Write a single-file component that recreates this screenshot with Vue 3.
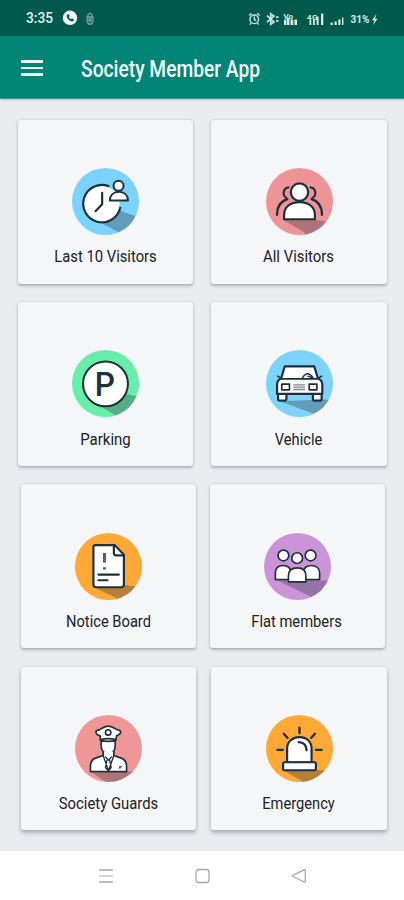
<script setup>
const rows = [
  {
    kind: 'wide',
    cards: [
      { id: 'recent', label: 'Last 10 Visitors', width: 102.5, color: '#7bd3fb', shade: 'M43 27L100 48L60 110L40 92L-24 58Z' },
      { id: 'visitors', label: 'All Visitors', width: 71, color: '#ef9496', shade: 'M-48 55L46 55L100 62L20 110L14 92Z' },
    ],
  },
  {
    kind: 'wide',
    cards: [
      { id: 'parking', label: 'Parking', width: 50.5, color: '#69eea9', shade: 'M66 32L110 42L40 110L30 95L-22 65Z' },
      { id: 'vehicle', label: 'Vehicle', width: 47.5, color: '#7dd3fb', shade: 'M-50 53L64 48L110 50L60 110L42 90L-60 52Z' },
    ],
  },
  {
    kind: 'narrow',
    cards: [
      { id: 'notice', label: 'Notice Board', width: 85, color: '#fea836', shade: 'M-42 63L46 55L110 63L30 110L24 94Z' },
      { id: 'members', label: 'Flat members', width: 90.5, color: '#cb94d9', shade: 'M-56 43L110 42L46 110L40 90Z' },
    ],
  },
  {
    kind: 'mixed',
    cards: [
      { id: 'guards', label: 'Society Guards', width: 99.5, color: '#ef9697', shade: 'M-50 72L52 70L100 66L20 110L-10 98Z' },
      { id: 'emergency', label: 'Emergency', width: 72.5, color: '#fea836', shade: 'M-48 66L50 64L100 68L10 110L6 96Z' },
    ],
  },
]
</script>

<template>
  <div class="screen">
    <header>
      <div class="status">
        <div class="status-left">
          <svg class="time" width="28" height="16" viewBox="0 0 28 16">
            <text x="0" y="12.7" textLength="27" lengthAdjust="spacingAndGlyphs">3:35</text>
          </svg>
          <svg class="phone" width="16" height="16" viewBox="0 0 16 16">
            <circle cx="8" cy="7.8" r="7.2" fill="#f3faf7" />
            <path d="M5.2 4.4l1.3-.3 1.2 2-.9 1c.5 1 1.200 1.600 2.200 2.100l1-.9 1.900 1.200c0 1.500-1.100 2.100-2.200 1.900-2.500-.5-4.700-2.900-5-5.200 0-.8.1-1.300.5-1.800z" fill="#075c50" />
          </svg>
          <svg class="usb" width="10" height="14" viewBox="0 0 10 14" fill="none" stroke="#75a69d" stroke-width="1.3">
            <path d="M3 4.500V2.500L5 1.200l2 1.300V4.500M2 5h6v4L6.500 12h-3L2 9zM4 7h2v2H4z" />
          </svg>
        </div>
        <svg class="status-right" width="132" height="18" viewBox="0 0 132 18" fill="none" stroke="#c9e3dc" stroke-width="1.400">
          <circle cx="6.300" cy="9.300" r="4.300" />
          <path d="M6.300 6.600v3l2 .9M1 5.600L3.500 3.300M11.600 5.600L9.200 3.300M3 13.100L2 14.600M9.600 13.100l1 1.500" />
          <path d="M19 5.600l7 6.300-3.300 2.400V3.800L26 6.100 19 12.200M28 7.200h2.500M28 10.800h2.500" stroke-width="1.700" />
          <g fill="#d5ebe5" stroke="none">
            <text x="35.500" y="9" font-size="8" textLength="9.500">Vo</text>
            <path d="M36 9.500h2.400v5.500h-2.400zM39 8h2.400v7h-2.400zM42.500 9.500h2.800v5.500h-2.800zM46.500 9.500h2.500v5.500h-2.500z" />
            <text x="59" y="9.500" font-size="8" textLength="10.500">4G</text>
            <path d="M61.500 10h1.800v5h-1.800zM65 9.500h1.800v5.500H65zM68.600 6.500h2v8.500h-2zM73 3.500h2.300v11.500H73z" />
            <path d="M82.500 12.500h2.200v2.500h-2.200zM86.500 11.500h2.200v3.500h-2.200zM90.300 9.500h2.200v5.500h-2.200z" />
            <path d="M94 7.500h1.400v7.500h-1.400z" />
            <text x="102.500" y="12.500" font-size="10" textLength="19" lengthAdjust="spacingAndGlyphs">31%</text>
            <path d="M128.500 4l-4.500 6.300h2.500l-1.500 5 4.500-6.500H127z" />
          </g>
        </svg>
      </div>
      <div class="appbar">
        <div class="burger"><i></i><i></i><i></i></div>
        <svg class="title" width="260" height="34" viewBox="0 0 260 34">
          <text x="0" y="25" textLength="179" lengthAdjust="spacingAndGlyphs">Society Member App</text>
        </svg>
      </div>
    </header>

    <main>
      <section v-for="(row, r) in rows" :key="r" class="row" :class="row.kind">
        <article v-for="card in row.cards" :key="card.id" class="card">
          <svg class="icon" viewBox="-100 -100 200 200">
            <clipPath :id="'disc-' + card.id"><circle r="100" /></clipPath>
            <circle r="100" :fill="card.color" />
            <path :d="card.shade" :clip-path="`url(#disc-${card.id})`" fill="#2c3440" fill-opacity=".34" />

            <g class="ink">
              <template v-if="card.id === 'recent'">
                <circle cx="-11" cy="7" r="53" class="plain" />
                <path d="M9 -46A56 56 0 1 0 44 19" fill="none" />
                <path d="M-10 -26V8L-30 29" fill="none" />
                <path d="M13 -3C13 -19 24 -29 40 -29S67 -19 67 -3Z" stroke-width="6" />
                <circle cx="39" cy="-47" r="15" stroke-width="6" />
              </template>

              <template v-else-if="card.id === 'visitors'">
                <path d="M-33 -42C-46 -41 -48 -30 -47 -21C-46 -14 -40 -10 -36 -7C-56 -1 -67 17 -67 40M33 -42C46 -41 48 -30 47 -21C46 -14 40 -10 36 -7C56 -1 67 17 67 40" fill="none" />
                <path d="M-46 53V40C-46 16 -27 2 0 2S46 16 46 40V53Z" />
                <circle cy="-28" r="26" />
              </template>

              <template v-else-if="card.id === 'parking'">
                <circle cx="0" cy="1" r="67" stroke-width="6" />
                <text x="-32" y="37" class="p-mark" textLength="60" lengthAdjust="spacingAndGlyphs">P</text>
              </template>

              <template v-else-if="card.id === 'vehicle'">
                <path d="M-64 29H-39V46Q-39 51 -45 51H-59Q-64 51 -64 46ZM40 29H66V46Q66 51 60 51H46Q40 51 40 46Z" />
                <path d="M-44 -51H44L55 -15Q68 -10 68 3V31H-67V3Q-67 -10 -55 -15Z" />
                <path d="M-65 -22L-53 -14M66 -22L54 -14M-53 -14H54" fill="none" stroke-width="5" />
                <path d="M8 -16Q24 -42 41 -16M25 -22L41 -16" fill="none" stroke-width="4" />
                <path d="M-53 2H-30V19H-53ZM29 2H52V19H29Z" stroke-width="5" />
                <path d="M-17 4H15M-17 11H15M-17 18H15" stroke="#7d8489" stroke-width="4" />
              </template>

              <template v-else-if="card.id === 'notice'">
                <path d="M-39 -64H18L46 -35V54Q46 62 38 62H-37Q-45 62 -45 54V-57Q-45 -64 -39 -64Z" />
                <path d="M16 -61V-40Q16 -33 23 -33H43" />
                <path d="M-12 -40V-12M-12 2V9" stroke="#56616b" stroke-width="9" stroke-linecap="butt" />
                <path d="M-30 24H31M-30 41H-3" fill="none" />
              </template>

              <template v-else-if="card.id === 'members'">
                <path d="M-66 39V19C-66 5 -57 -3 -43 -3S-20 5 -20 19V39ZM18 39V19C18 5 27 -3 41 -3S66 5 66 19V39Z" stroke-width="5" />
                <path d="M-27 46V28C-27 12 -17 4 0 4S25 12 25 28V46Z" stroke-width="5" />
                <circle cx="-42" cy="-33" r="16" stroke-width="5" />
                <circle cx="-1" cy="-25" r="16" stroke-width="5" />
                <circle cx="39" cy="-33" r="16" stroke-width="5" />
              </template>

              <template v-else-if="card.id === 'guards'">
                <path d="M-22 -22V-9C-22 6 -14 15 0 15S20 6 20 -9V-22Z" stroke-width="5" />
                <path d="M-16 10V21L-37 28C-49 32 -54 43 -54 54V69H54V54C54 43 48 32 36 28L16 21V10" stroke-width="5" />
                <path d="M-16 21L0 66L16 21M-9 25L0 35L9 25M-5 36L-9 57L0 67L8 57L4 36" fill="none" stroke-width="4" />
                <path d="M-24 -24L-25 -38C-41 -43 -40 -53 -31 -55C-21 -57 -14 -67 -1 -67S20 -57 30 -55C40 -53 39 -43 24 -38L22 -24Q-1 -19 -24 -24Z" stroke-width="5" />
                <path d="M-23 -27Q0 -32 22 -27" fill="none" stroke-width="5" />
                <circle cx="-1" cy="-48" r="8" stroke-width="5" />
                <path d="M33 57L39 54M34 52V60" stroke-width="3" />
              </template>

              <template v-else>
                <path d="M-37 42V0C-37 -20 -21 -34 0 -34S36 -20 36 0V42Z" />
                <rect x="-49" y="41" width="98" height="24" rx="4" />
                <path d="M-2 -19Q20 -18 21 5" fill="none" stroke-width="7" />
                <path d="M0 -62V-46M-47 -44L-36 -32M46 -44L35 -32M-66 4H-50M49 4H66" fill="none" stroke-width="7" />
              </template>
            </g>
          </svg>
          <svg class="label" viewBox="0 0 170 24">
            <text :x="84.5 - card.width / 2" y="16" :textLength="card.width" lengthAdjust="spacingAndGlyphs">{{ card.label }}</text>
          </svg>
        </article>
      </section>
    </main>

    <nav>
      <svg width="16" height="16" viewBox="0 0 16 16"><path d="M1 2h14M1 14h14" stroke-width="1.600" /><path d="M1 8h14" opacity=".6" stroke-width="1.600" /></svg>
      <svg width="16" height="16" viewBox="0 0 16 16"><rect x="2" y="1.500" width="13" height="13" rx="2.500" /></svg>
      <svg width="16" height="16" viewBox="0 0 16 16"><path d="M13.200 1.800L1.700 7.300q-.8.500 0 1L13.200 14q1.100.4 1.100-.8V2.600q0-1.200-1.100-.8z" /></svg>
    </nav>
  </div>
</template>

<style>
body { background: #fefefe; }
</style>

<style scoped>
.screen {
  width: 404px;
  height: 900px;
  overflow: hidden;
  display: flex;
  flex-direction: column;
  background: #ebecf0;
  font-family: Roboto, "Liberation Sans", sans-serif;
}
svg { display: block; flex: none; }
.status {
  box-sizing: border-box;
  height: 36px;
  background: #025a4d;
  display: flex;
  justify-content: space-between;
  padding: 10px 24px 0 26px;
}
.status-left { display: flex; }
.time text { font-size: 14.5px; font-weight: 500; fill: #e4f2ee; }
.phone { margin-left: 8px; }
.usb { margin: 2px 0 0 7px; }
.status-right { font-weight: 700; }
.appbar {
  box-sizing: border-box;
  height: 63px;
  display: flex;
  align-items: flex-start;
  padding: 16px 0 0 21px;
  background: #028575;
  border-bottom: 1px solid #3d9a8e;
}
header { box-shadow: 0 1px 2px rgba(60, 80, 90, .3); }
.burger { width: 22px; display: grid; gap: 4px; padding-top: 8px; margin-right: 38px; }
.burger i { height: 2.600px; background: #e9f8f4; }
.title text { font-size: 23.500px; font-weight: 500; fill: #f1fbf8; }

main {
  box-sizing: border-box;
  height: 752px;
  display: flex;
  flex-direction: column;
  gap: 18.500px;
  padding-top: 21px;
}
.row { display: grid; height: 163.700px; flex: none; }
.wide { grid-template-columns: 175px 175.500px; gap: 18px; padding-left: 18.400px; }
.narrow { grid-template-columns: 174.500px 175px; gap: 14px; padding-left: 21.300px; }
.mixed { grid-template-columns: 174.500px 175.500px; gap: 15.500px; padding-left: 21.300px; }
.card {
  display: flex;
  flex-direction: column;
  align-items: center;
  box-sizing: border-box;
  padding-top: 48.300px;
  border-radius: 3px;
  background: #f4f6f8;
  box-shadow: 0 1.500px 3px rgba(55, 60, 70, .32), 0 0 2px rgba(55, 60, 70, .12);
}
.mixed .card { box-shadow: 0 3px 4px rgba(55, 60, 70, .32), 0 0 3px rgba(55, 60, 70, .12); }
.icon { width: 67px; height: 67px; }
.ink { fill: #fff; stroke: #1d303e; stroke-width: 6.500; stroke-linejoin: round; stroke-linecap: round; }
.plain { stroke: none; }
.p-mark { font-size: 101px; font-weight: 500; fill: #1d303e; stroke: none; }
.label { width: 170px; height: 24px; margin-top: 11.200px; }
.label text { font-size: 16.700px; fill: #202224; }

nav {
  height: 49px;
  flex: none;
  background: #fefefe;
  display: flex;
  justify-content: center;
  gap: 80.500px;
  padding-top: 17px;
  box-sizing: border-box;
}
nav svg { fill: none; stroke: #a8a8a8; stroke-width: 1.300; }
</style>
